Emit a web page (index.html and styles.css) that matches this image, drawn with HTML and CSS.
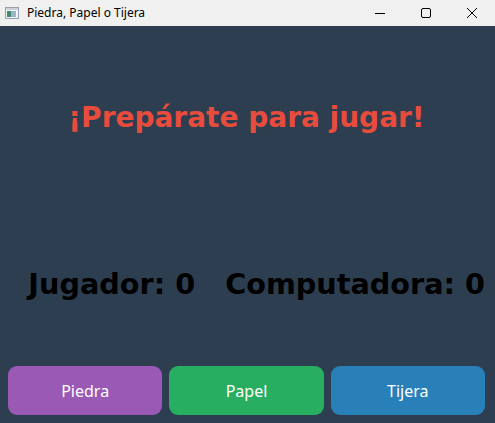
FILE: index.html
```html
<!DOCTYPE html>
<html lang="es">
<head>
<meta charset="utf-8">
<title>Piedra, Papel o Tijera</title>
<link rel="stylesheet" href="styles.css">
</head>
<body>
<div class="window">
  <div class="titlebar">
    <div class="title-left">
      <svg class="app-icon" width="14" height="12" viewBox="0 0 14 12">
        <rect x="0.5" y="0.5" width="13" height="11" fill="#f4f4f4" stroke="#9aa3ad"/>
        <rect x="1" y="1" width="12" height="2" fill="#c9d3dc"/>
        <rect x="2" y="4" width="4" height="6" fill="#3f8a6d"/>
        <rect x="6" y="4" width="5" height="6" fill="#9bb6c9"/>
      </svg>
      <span class="title-text">Piedra, Papel o Tijera</span>
    </div>
    <div class="controls">
      <span class="ctl">
        <svg width="12" height="12" viewBox="0 0 12 12"><path d="M1 6.5h10" stroke="#000" stroke-width="1"/></svg>
      </span>
      <span class="ctl">
        <svg width="12" height="12" viewBox="0 0 12 12"><rect x="1.5" y="1.5" width="9" height="9" rx="1.5" fill="none" stroke="#000" stroke-width="1"/></svg>
      </span>
      <span class="ctl">
        <svg width="12" height="12" viewBox="0 0 12 12"><path d="M1 1L11 11M11 1L1 11" stroke="#000" stroke-width="1"/></svg>
      </span>
    </div>
  </div>
  <main class="content">
    <h1 class="status">¡Prepárate para jugar!</h1>
    <div class="scores">
      <span class="score">Jugador: 0</span>
      <span class="score">Computadora: 0</span>
    </div>
    <div class="buttons">
      <button class="btn btn-rock">Piedra</button>
      <button class="btn btn-paper">Papel</button>
      <button class="btn btn-scissors">Tijera</button>
    </div>
  </main>
</div>
</body>
</html>
```

FILE: styles.css
```css
html, body {
  margin: 0;
  padding: 0;
  height: 100%;
}
body {
  background: #2c3e50;
  font-family: "Noto Sans", sans-serif;
}
.window {
  display: flex;
  flex-direction: column;
  height: 423px;
  width: 495px;
}
.titlebar {
  height: 26px;
  background: #f0f0f0;
  display: flex;
  align-items: center;
  justify-content: space-between;
  flex-shrink: 0;
}
.title-left {
  display: flex;
  align-items: center;
  padding-left: 5px;
  gap: 8px;
}
.app-icon {
  display: block;
}
.title-text {
  font-family: "Noto Sans", sans-serif;
  font-size: 12px;
  color: #000;
  position: relative;
  top: -1px;
}
.controls {
  display: flex;
  height: 100%;
}
.ctl {
  width: 46px;
  display: flex;
  align-items: center;
  justify-content: center;
}
.ctl svg {
  display: block;
}
.content {
  flex: 1;
  display: flex;
  flex-direction: column;
  padding: 0 10px 8px 8px;
}
.status {
  margin: 75px 0 0 0;
  text-align: center;
  font-family: "DejaVu Sans", Verdana, sans-serif;
  font-weight: bold;
  font-size: 28px;
  line-height: 34px;
  color: #e74c3c;
}
.scores {
  margin-top: 132px;
  display: flex;
  justify-content: flex-end;
  gap: 30px;
  font-family: "DejaVu Sans", Verdana, sans-serif;
  font-weight: bold;
  font-size: 28.7px;
  line-height: 34px;
  color: #000;
}
.buttons {
  margin-top: auto;
  display: flex;
  gap: 7px;
}
.btn {
  flex: 1;
  height: 49px;
  border: none;
  border-radius: 9px;
  color: #fff;
  font-family: "Noto Sans", sans-serif;
  font-size: 16px;
  padding: 0;
}
.btn-rock { background: #9b59b6; }
.btn-paper { background: #27ae60; }
.btn-scissors { background: #2980b9; }
```
